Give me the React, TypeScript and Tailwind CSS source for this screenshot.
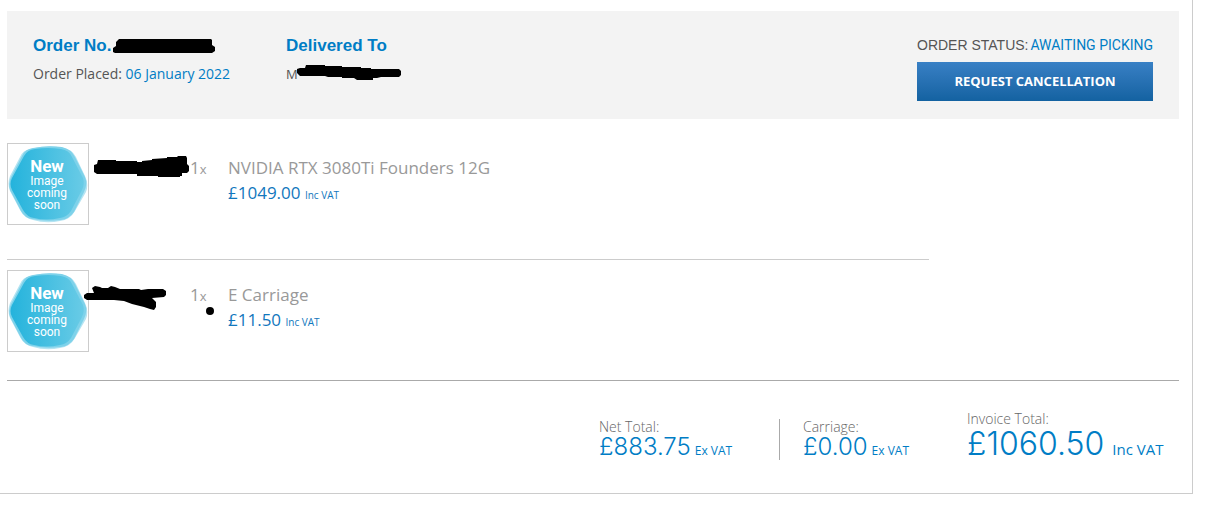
import React from 'react';

interface OrderLine {
  id: number;
  qty: number;
  name: string;
  price: string;
  code: React.ReactNode;
}

interface TotalProps {
  label: string;
  amount: string;
  suffix: string;
}

const lines: OrderLine[] = [
  {
    id: 1,
    qty: 1,
    name: 'NVIDIA RTX 3080Ti Founders 12G',
    price: '£1049.00',
    code: (
      <svg className="absolute left-[5px] top-[13px]" width="96" height="22" aria-hidden="true">
        <path d="M4 4H22V5H43V6H48V5L58 4V3L73 2V1H83L84 0H92L93 2V8L95 10V15L93 17H88V20H86V21H64V20H43V18H3L0 16V9L3 8Z" />
      </svg>
    ),
  },
  {
    id: 2,
    qty: 1,
    name: 'E Carriage',
    price: '£11.50',
    code: (
      <svg className="absolute -left-[5px] top-[15px]" width="132" height="32" aria-hidden="true">
        <path d="M8 3L11 1L16 2L18 3L24 3L27 1L31 2L36 4H55L57 5L64 4H79L82 6V10L80 12L68 13L72 17V22L70 25L66 24L60 22L52 20L48 19L40 16L30 15H3L0 13V10L3 8L10 8Z" />
        <circle cx="126" cy="26" r="4" />
      </svg>
    ),
  },
];

const ComingSoonImage = () => (
  <svg width="80" height="80" viewBox="0 0 80 80" role="img" aria-label="New image coming soon">
    <defs>
      <linearGradient id="badge" x1="0" y1="0" x2="1" y2="0">
        <stop offset="0" stopColor="#24b3dc" />
        <stop offset="1" stopColor="#69cbe6" />
      </linearGradient>
    </defs>
    <path fill="#b5e4f2" d="M22 5Q40 0 55 4Q64 5 68 13L77 32Q81 40 78 48L67 67Q62 76 52 77Q38 80 25 76Q16 74 12 66L2 47Q-1 40 2 32L12 13Q15 6 22 5Z" />
    <path fill="#7ed2ea" d="M25 4Q40 1 54 3Q63 5 67 13L77 33Q80 40 76 48L66 68Q61 75 53 76Q38 78 24 75Q17 74 13 67L2 46Q0 40 3 33L14 12Q17 5 25 4Z" />
    <path fill="url(#badge)" d="M27 5Q40 3 53 5Q61 6 64 13L75 34Q77 40 74 46L63 67Q59 73 52 74Q38 77 26 74Q19 73 15 66L4 46Q1 40 4 34L16 12Q19 6 27 5Z" />
    <g fill="#fff" textAnchor="middle" className="font-['Roboto']">
      <text x="39" y="28" fontSize="17" fontWeight="700">New</text>
      <text x="39" y="41" fontSize="12">Image</text>
      <text x="39" y="53" fontSize="12">coming</text>
      <text x="39" y="65" fontSize="12">soon</text>
    </g>
  </svg>
);

const OrderRow: React.FC<{ line: OrderLine }> = ({ line }) => (
  <div className="flex text-[#999]">
    <div className="shrink-0 border border-[#ccc]">
      <ComingSoonImage />
    </div>
    <div className="relative w-[101px] shrink-0">{line.code}</div>
    <div className="w-[38px] shrink-0 pt-3 text-[17px] leading-[25px]">
      {line.qty}<span className="text-[13px]">x</span>
    </div>
    <div className="pt-3 text-[17px] leading-[25px]">
      <p>{line.name}</p>
      <p className="text-[#1177bd]">
        {line.price} <span className="text-[10px]">Inc VAT</span>
      </p>
    </div>
  </div>
);

const Total: React.FC<TotalProps> = ({ label, amount, suffix }) => (
  <div className="whitespace-nowrap pb-px">
    <p className="text-[14px] font-light leading-4 text-[#666]">{label}</p>
    <p className="flex items-baseline gap-1 font-['Inter'] text-[24px] font-light leading-6 text-[#007dc5]">
      {amount}
      <span className="font-['Open_Sans'] text-[12px] font-normal leading-4">{suffix}</span>
    </p>
  </div>
);

export default function App() {
  return (
    <main className="mr-8 border-b border-r border-[#ccc] bg-white pb-[33px] pl-[7px] pr-[13px] pt-[11px] font-['Open_Sans',sans-serif]">
      <header className="flex justify-between bg-[#f3f3f3] px-[26px] pb-[18px] pt-6 text-[14px] text-[#555]">
        <div className="flex pt-px">
          <div className="w-[253px]">
            <h2 className="flex items-center font-['Liberation_Sans'] text-[17px] font-bold leading-5 text-[#007dc5]">
              Order No.
              <svg className="ml-[2px]" width="102" height="16" aria-hidden="true">
                <path d="M6 1H98L99 2V7L102 9V13L99 15H2L0 14V10L3 8V4Z" />
              </svg>
            </h2>
            <p className="mt-2 leading-5">
              Order Placed: <span className="text-[#007dc5]">06 January 2022</span>
            </p>
          </div>
          <div>
            <h2 className="font-['Liberation_Sans'] text-[17px] font-bold leading-5 text-[#007dc5]">Delivered To</h2>
            <p className="mt-2 flex text-[13px] leading-5">
              M
              <svg className="-ml-px" width="105" height="18" aria-hidden="true">
                <path d="M9 1L28 1V2L45 2V3L64 3V4H74V5H102L104 7V11L102 13H84L80 14H76V16H60L57 14H45V13H31L28 12H3L0 9V5L3 4H8Z" />
              </svg>
            </p>
          </div>
        </div>
        <div className="w-[236px]">
          <p className="flex justify-between whitespace-nowrap font-['Liberation_Sans'] leading-5">
            ORDER STATUS: <span className="font-['Roboto'] text-[#007dc5]">AWAITING PICKING</span>
          </p>
          <button
            type="button"
            className="mt-[7px] block h-[39px] w-full bg-linear-to-b from-[#3880c5] to-[#1362a1] text-[13px] font-bold text-white"
          >
            REQUEST CANCELLATION
          </button>
        </div>
      </header>

      <section className="pt-6">
        <OrderRow line={lines[0]} />
        <hr className="mb-[10px] mr-[250px] mt-[34px] border-[#ccc]" />
        <OrderRow line={lines[1]} />
      </section>

      <section className="mt-7 flex items-end justify-end border-t border-[#aaa] pr-[17px] pt-[29px]">
        <div className="w-[180px]">
          <Total label="Net Total:" amount="£883.75" suffix="Ex VAT" />
        </div>
        <div className="mr-6 w-[164px] border-l border-[#aaa] pl-[23px]">
          <Total label="Carriage:" amount="£0.00" suffix="Ex VAT" />
        </div>
        <div className="w-[195px] whitespace-nowrap">
          <p className="text-[14px] font-light leading-[18px] text-[#666]">Invoice Total:</p>
          <p className="flex items-baseline gap-2 font-['Inter'] text-[32px] font-light leading-8 text-[#007dc5]">
            £1060.50
            <span className="font-['Open_Sans'] text-[15px] font-normal leading-5">Inc VAT</span>
          </p>
        </div>
      </section>
    </main>
  );
}
